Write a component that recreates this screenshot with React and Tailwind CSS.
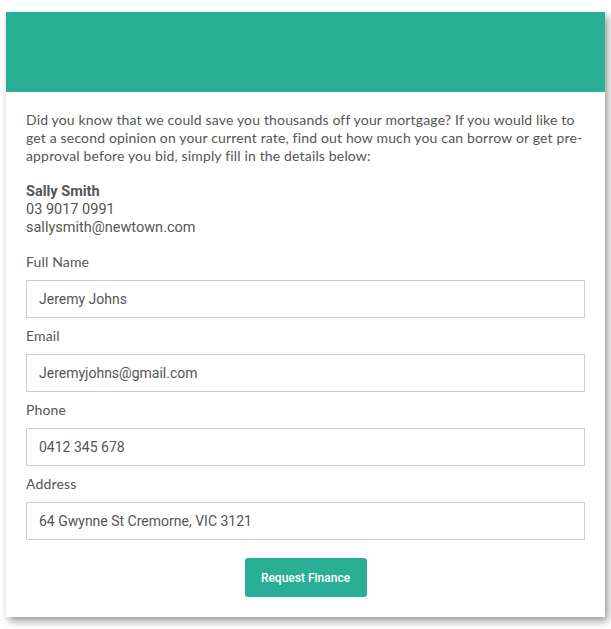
import React from "react";

const fields = [
  { label: "Full Name", value: "Jeremy Johns" },
  { label: "Email", value: "Jeremyjohns@gmail.com" },
  { label: "Phone", value: "0412 345 678" },
  { label: "Address", value: "64 Gwynne St Cremorne, VIC 3121" },
];

export default function App() {
  return (
    <div className="min-h-screen bg-white pt-3 pl-[6px] pr-[6px]">
      <div className="w-[599px] bg-white shadow-[3px_4px_8px_rgba(0,0,0,0.4)]">
        {/* Header band */}
        <div className="h-20 bg-[#29af96]" />

        <div className="px-5 pt-[19px] pb-5">
          {/* Intro */}
          <p className="font-['Lato',sans-serif] text-[14px] leading-[18px] tracking-[0.16px] text-[#555]">
            <span className="block whitespace-nowrap">
              Did you know that we could save you thousands off your mortgage? If you would like to
            </span>
            <span className="block whitespace-nowrap">
              get a second opinion on your current rate, find out how much you can borrow or get pre-
            </span>
            <span className="block whitespace-nowrap">
              approval before you bid, simply fill in the details below:
            </span>
          </p>

          {/* Contact */}
          <div className="mt-[18px] font-['Roboto',sans-serif] text-[14.5px] leading-[18px] text-[#555]">
            <p className="font-bold">Sally Smith</p>
            <p>03 9017 0991</p>
            <p>sallysmith@newtown.com</p>
          </div>

          {/* Form */}
          <form className="mt-4" onSubmit={(e) => e.preventDefault()}>
            {fields.map((f) => (
              <div key={f.label} className="mb-[9px]">
                <label className="block mb-[9px] font-['Lato',sans-serif] text-[14px] leading-[18px] tracking-[0.16px] text-[#555]">
                  {f.label}
                </label>
                <input
                  type="text"
                  defaultValue={f.value}
                  className="block w-full h-[38px] border border-[#cccccc] px-3 font-['Roboto',sans-serif] text-[14px] text-[#555] outline-none"
                />
              </div>
            ))}

            <div className="flex justify-center pt-[9px]">
              <button
                type="submit"
                className="w-[122px] h-[39px] rounded-[3px] bg-[#29af96] text-white font-['Roboto',sans-serif] font-medium text-[12px]"
              >
                Request Finance
              </button>
            </div>
          </form>
        </div>
      </div>
    </div>
  );
}
